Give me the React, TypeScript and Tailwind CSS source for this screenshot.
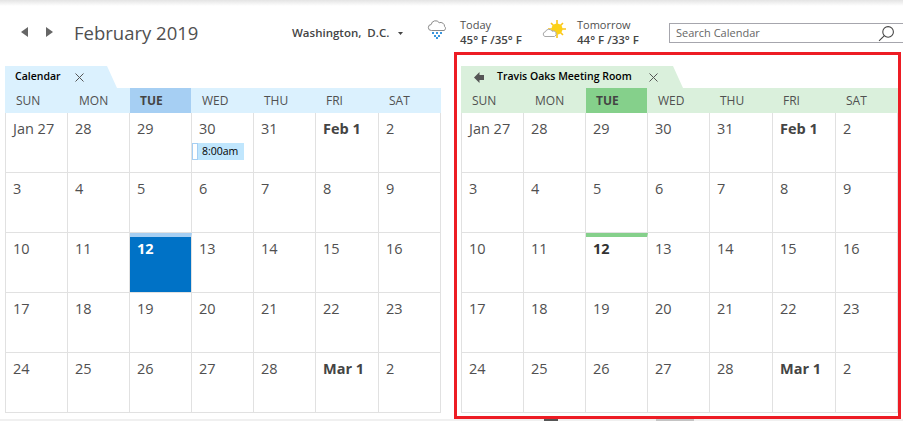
const days = ["SUN", "MON", "TUE", "WED", "THU", "FRI", "SAT"];

const weeks = [
  ["Jan 27", "28", "29", "30", "31", "Feb 1", "2"],
  ["3", "4", "5", "6", "7", "8", "9"],
  ["10", "11", "12", "13", "14", "15", "16"],
  ["17", "18", "19", "20", "21", "22", "23"],
  ["24", "25", "26", "27", "28", "Mar 1", "2"],
];

function CloseIcon() {
  return (
    <svg width="9" height="9" viewBox="0 0 9 9" className="text-[#555]" stroke="currentColor" fill="none">
      <path d="M0.5 0.5l8 8M8.5 0.5l-8 8" />
    </svg>
  );
}

function RainIcon() {
  return (
    <svg width="21" height="20" viewBox="0 0 21 20" fill="none">
      <path d="M4.5 11.5a3 3 0 0 1-.3-6 4.4 4.4 0 0 1 8-1.8 4 4 0 0 1 5.4 3.8 2.3 2.3 0 0 1-.6 4z" stroke="#8a8a8a" strokeWidth="1" fill="#fff" />
      <g fill="#3a96dd">
        <rect x="5" y="13" width="2" height="2" />
        <rect x="9" y="13" width="2" height="2" />
        <rect x="13" y="13" width="2" height="2" />
        <rect x="7" y="16" width="2" height="2" />
        <rect x="11" y="16" width="2" height="2" />
        <rect x="9" y="18" width="2" height="2" />
      </g>
    </svg>
  );
}

function SunIcon() {
  return (
    <svg width="24" height="18" viewBox="0 0 24 18" fill="none">
      <g stroke="#fcc419" strokeWidth="1.6">
        <path d="M15 0v18M6 9h18M9 3l12 12M21 3L9 15" />
      </g>
      <circle cx="15" cy="9" r="5.5" fill="#fcd116" />
      <path d="M3 16.5a2.4 2.4 0 0 1 .4-4.7 3.6 3.6 0 0 1 6.6-.6 2.8 2.8 0 0 1 2.5 5.3z" fill="#fff" stroke="#a8a8a8" />
    </svg>
  );
}

function Calendar({ room }: { room: boolean }) {
  return (
    <div className={room ? "w-[437px]" : "w-[436px]"}>
      <div className="h-[22px] flex">
        {room ? (
          <>
            <div className="w-[212px] bg-[#daf0dc] flex items-center pl-[13px] text-[10.5px] font-semibold text-black">
              <svg width="10" height="11" viewBox="0 0 10 11" className="mr-[13px]">
                <path d="M0 5.5L5.5 0v3H10v5H5.5v3z" fill="#555" />
              </svg>
              <span className="w-[152px]">Travis Oaks Meeting Room</span>
              <CloseIcon />
            </div>
            <svg width="10" height="22" viewBox="0 0 10 22">
              <path d="M0 0l10 22H0z" fill="#daf0dc" />
            </svg>
          </>
        ) : (
          <>
            <div className="w-[102px] bg-[#dbf1fe] flex items-center pl-[10px] text-[10.5px] font-semibold text-black">
              <span className="w-[60px]">Calendar</span>
              <CloseIcon />
            </div>
            <svg width="10" height="22" viewBox="0 0 10 22">
              <path d="M0 0l10 22H0z" fill="#dbf1fe" />
            </svg>
          </>
        )}
      </div>
      <div
        className={`grid h-[25px] ${
          room
            ? "grid-cols-[63px_62px_61px_62px_63px_63px_63px] bg-[#daf0dc]"
            : "grid-cols-[63px_62px_61px_62px_62px_63px_63px] bg-[#dbf1fe]"
        }`}
      >
        {days.map((d) => (
          <div
            key={d}
            className={`flex items-center text-[12px] ${
              d === "TUE"
                ? `pl-[10px] font-bold text-[#444] ${room ? "bg-[#85d08b]" : "bg-[#a6cff3]"}`
                : "pl-[11px] text-[#505050]"
            }`}
          >
            {d}
          </div>
        ))}
      </div>
      <div className="border-l border-[#e1e1e1]">
        {weeks.map((week, i) => (
          <div
            key={i}
            className={`grid h-[60px] ${
              room ? "grid-cols-[62px_62px_62px_62px_63px_63px_62px]" : "grid-cols-[62px_62px_62px_62px_62px_63px_62px]"
            }`}
          >
            {week.map((label, j) => {
              const isToday = i === 2 && j === 2;
              const isFirst = label === "Feb 1" || label === "Mar 1";
              let tone = "pt-[6px] text-[#505050]";
              if (isFirst) tone = "pt-[6px] font-bold text-[#444]";
              if (isToday) {
                tone = room
                  ? "pt-[2px] font-bold text-[#333] border-t-4 border-t-[#85d08b]"
                  : "pt-[2px] bg-[#0072c6] font-bold text-white border-t-4 border-t-[#a6cff3]";
              }
              return (
                <div
                  key={j}
                  className={`relative border-r border-b border-[#e1e1e1] pl-[7px] text-[14.5px] leading-[20px] ${tone}`}
                >
                  {label}
                  {!room && i === 0 && j === 3 && (
                    <div className="absolute left-0 top-[30px] w-[52px] h-[17px] bg-[#c0e6fd] flex items-center text-[10.5px] leading-none font-normal text-black">
                      <span className="w-[6px] h-[17px] bg-white border border-[#a6cff3] mr-[4px]" />
                      8:00am
                    </div>
                  )}
                </div>
              );
            })}
          </div>
        ))}
      </div>
    </div>
  );
}

export default function App() {
  return (
    <div className="relative w-[903px] h-[421px] overflow-hidden bg-white font-['Open_Sans','Noto_Sans',sans-serif] text-[#444]">
      <div className="h-[6px] bg-gradient-to-b from-[#e4e4e4] to-white" />
      <div className="h-[60px] flex items-start">
        <div className="pt-[21px] pl-[21px] flex items-center gap-[18px] w-[74px] shrink-0">
          <svg width="7" height="10" viewBox="0 0 7 10" className="shrink-0">
            <path d="M7 0v10L0 5z" fill="#666" />
          </svg>
          <svg width="7" height="10" viewBox="0 0 7 10" className="shrink-0">
            <path d="M0 0v10l7-5z" fill="#666" />
          </svg>
        </div>
        <div className="w-[218px] pt-[14px] text-[18.5px] leading-[26px] text-[#505050] shrink-0">February 2019</div>
        <div className="w-[135px] pt-[19px] flex items-center text-[11.5px] leading-[16px] font-semibold text-[#444] shrink-0">
          <span className="w-[106px]">Washington,&nbsp; D.C.</span>
          <svg width="5" height="3" viewBox="0 0 5 3">
            <path d="M0 0h5L2.5 3z" fill="#444" />
          </svg>
        </div>
        <div className="w-[33px] pt-[13px] shrink-0">
          <RainIcon />
        </div>
        <div className="w-[82px] pt-[11px] text-[11px] leading-[15px] shrink-0">
          <div className="text-[#505050]">Today</div>
          <div className="font-semibold text-[11.5px]">45° F /35° F</div>
        </div>
        <div className="w-[35px] pt-[14px] shrink-0">
          <SunIcon />
        </div>
        <div className="w-[92px] pt-[11px] text-[11px] leading-[15px] shrink-0">
          <div className="text-[#505050]">Tomorrow</div>
          <div className="font-semibold text-[11.5px]">44° F /33° F</div>
        </div>
        <div className="mt-[17px] w-[235px] h-[20px] shrink-0 border border-[#a6a6ad] flex items-center justify-between pl-[6px] pr-[8px] text-[11px] text-[#666]">
          Search Calendar
          <svg width="17" height="17" viewBox="0 0 16 16" fill="none" stroke="#444">
            <circle cx="9.5" cy="6.5" r="5" />
            <path d="M6 10l-5 5" />
          </svg>
        </div>
      </div>
      <div className="flex pl-[5px] gap-[20px]">
        <Calendar room={false} />
        <Calendar room={true} />
      </div>
      <div className="absolute left-[454px] top-[52px] w-[447px] h-[367px] border-[3px] border-[#ed1c24] pointer-events-none" />
      <div className="absolute left-0 bottom-0 w-full h-[2px] bg-[#f0f0f0]" />
      <div className="absolute left-[544px] bottom-0 w-[14px] h-[2px] bg-[#555]" />
      <div className="absolute left-[656px] bottom-0 w-[38px] h-[2px] bg-[#c4c4c4]" />
    </div>
  );
}
